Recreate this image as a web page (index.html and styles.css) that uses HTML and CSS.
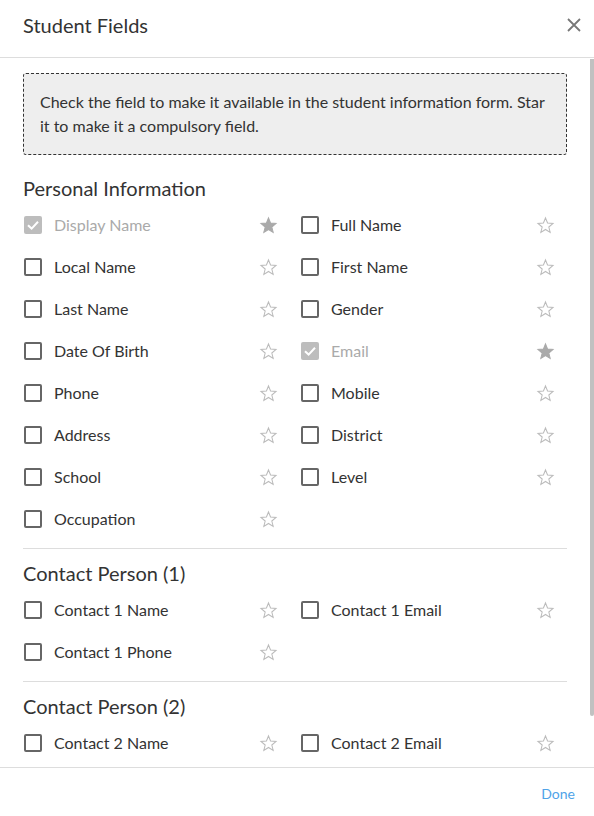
FILE: index.html
```html
<!DOCTYPE html>
<html>
<head>
<meta charset="utf-8">
<link rel="stylesheet" href="styles.css">
</head>
<body>
<div class="dialog">
  <header class="dlg-header">
    <h1 class="dlg-title">Student Fields</h1>
    <button class="close-btn" aria-label="Close">
      <svg width="16" height="16" viewBox="0 0 16 16"><path d="M2 2 L14 14 M14 2 L2 14" stroke="#777" stroke-width="1.8" fill="none"/></svg>
    </button>
  </header>
  <div class="body-wrap">
    <div class="dlg-body">
      <div class="info-box">Check the field to make it available in the student information form. Star it to make it a compulsory field.</div>

      <section class="section">
        <h2 class="section-title">Personal Information</h2>
        <div class="field-grid">
          <div class="field disabled"><span class="cb checked"><svg viewBox="0 0 18 18" width="18" height="18"><path d="M4 9.2 L7.6 12.6 L14 5.8" stroke="#fff" stroke-width="2" fill="none"/></svg></span><span class="label">Display Name</span><svg class="star filled" viewBox="0 0 24 24"><path d="M12 2.5 L14.6 8.9 L21.5 9.4 L16.2 13.9 L17.9 20.7 L12 17 L6.1 20.7 L7.8 13.9 L2.5 9.4 L9.4 8.9 Z"/></svg></div>
          <div class="field"><span class="cb"></span><span class="label">Full Name</span><svg class="star" viewBox="0 0 24 24"><path d="M12 2.5 L14.6 8.9 L21.5 9.4 L16.2 13.9 L17.9 20.7 L12 17 L6.1 20.7 L7.8 13.9 L2.5 9.4 L9.4 8.9 Z"/></svg></div>
          <div class="field"><span class="cb"></span><span class="label">Local Name</span><svg class="star" viewBox="0 0 24 24"><path d="M12 2.5 L14.6 8.9 L21.5 9.4 L16.2 13.9 L17.9 20.7 L12 17 L6.1 20.7 L7.8 13.9 L2.5 9.4 L9.4 8.9 Z"/></svg></div>
          <div class="field"><span class="cb"></span><span class="label">First Name</span><svg class="star" viewBox="0 0 24 24"><path d="M12 2.5 L14.6 8.9 L21.5 9.4 L16.2 13.9 L17.9 20.7 L12 17 L6.1 20.7 L7.8 13.9 L2.5 9.4 L9.4 8.9 Z"/></svg></div>
          <div class="field"><span class="cb"></span><span class="label">Last Name</span><svg class="star" viewBox="0 0 24 24"><path d="M12 2.5 L14.6 8.9 L21.5 9.4 L16.2 13.9 L17.9 20.7 L12 17 L6.1 20.7 L7.8 13.9 L2.5 9.4 L9.4 8.9 Z"/></svg></div>
          <div class="field"><span class="cb"></span><span class="label">Gender</span><svg class="star" viewBox="0 0 24 24"><path d="M12 2.5 L14.6 8.9 L21.5 9.4 L16.2 13.9 L17.9 20.7 L12 17 L6.1 20.7 L7.8 13.9 L2.5 9.4 L9.4 8.9 Z"/></svg></div>
          <div class="field"><span class="cb"></span><span class="label">Date Of Birth</span><svg class="star" viewBox="0 0 24 24"><path d="M12 2.5 L14.6 8.9 L21.5 9.4 L16.2 13.9 L17.9 20.7 L12 17 L6.1 20.7 L7.8 13.9 L2.5 9.4 L9.4 8.9 Z"/></svg></div>
          <div class="field disabled"><span class="cb checked"><svg viewBox="0 0 18 18" width="18" height="18"><path d="M4 9.2 L7.6 12.6 L14 5.8" stroke="#fff" stroke-width="2" fill="none"/></svg></span><span class="label">Email</span><svg class="star filled" viewBox="0 0 24 24"><path d="M12 2.5 L14.6 8.9 L21.5 9.4 L16.2 13.9 L17.9 20.7 L12 17 L6.1 20.7 L7.8 13.9 L2.5 9.4 L9.4 8.9 Z"/></svg></div>
          <div class="field"><span class="cb"></span><span class="label">Phone</span><svg class="star" viewBox="0 0 24 24"><path d="M12 2.5 L14.6 8.9 L21.5 9.4 L16.2 13.9 L17.9 20.7 L12 17 L6.1 20.7 L7.8 13.9 L2.5 9.4 L9.4 8.9 Z"/></svg></div>
          <div class="field"><span class="cb"></span><span class="label">Mobile</span><svg class="star" viewBox="0 0 24 24"><path d="M12 2.5 L14.6 8.9 L21.5 9.4 L16.2 13.9 L17.9 20.7 L12 17 L6.1 20.7 L7.8 13.9 L2.5 9.4 L9.4 8.9 Z"/></svg></div>
          <div class="field"><span class="cb"></span><span class="label">Address</span><svg class="star" viewBox="0 0 24 24"><path d="M12 2.5 L14.6 8.9 L21.5 9.4 L16.2 13.9 L17.9 20.7 L12 17 L6.1 20.7 L7.8 13.9 L2.5 9.4 L9.4 8.9 Z"/></svg></div>
          <div class="field"><span class="cb"></span><span class="label">District</span><svg class="star" viewBox="0 0 24 24"><path d="M12 2.5 L14.6 8.9 L21.5 9.4 L16.2 13.9 L17.9 20.7 L12 17 L6.1 20.7 L7.8 13.9 L2.5 9.4 L9.4 8.9 Z"/></svg></div>
          <div class="field"><span class="cb"></span><span class="label">School</span><svg class="star" viewBox="0 0 24 24"><path d="M12 2.5 L14.6 8.9 L21.5 9.4 L16.2 13.9 L17.9 20.7 L12 17 L6.1 20.7 L7.8 13.9 L2.5 9.4 L9.4 8.9 Z"/></svg></div>
          <div class="field"><span class="cb"></span><span class="label">Level</span><svg class="star" viewBox="0 0 24 24"><path d="M12 2.5 L14.6 8.9 L21.5 9.4 L16.2 13.9 L17.9 20.7 L12 17 L6.1 20.7 L7.8 13.9 L2.5 9.4 L9.4 8.9 Z"/></svg></div>
          <div class="field"><span class="cb"></span><span class="label">Occupation</span><svg class="star" viewBox="0 0 24 24"><path d="M12 2.5 L14.6 8.9 L21.5 9.4 L16.2 13.9 L17.9 20.7 L12 17 L6.1 20.7 L7.8 13.9 L2.5 9.4 L9.4 8.9 Z"/></svg></div>
        </div>
      </section>

      <section class="section">
        <h2 class="section-title">Contact Person (1)</h2>
        <div class="field-grid">
          <div class="field"><span class="cb"></span><span class="label">Contact 1 Name</span><svg class="star" viewBox="0 0 24 24"><path d="M12 2.5 L14.6 8.9 L21.5 9.4 L16.2 13.9 L17.9 20.7 L12 17 L6.1 20.7 L7.8 13.9 L2.5 9.4 L9.4 8.9 Z"/></svg></div>
          <div class="field"><span class="cb"></span><span class="label">Contact 1 Email</span><svg class="star" viewBox="0 0 24 24"><path d="M12 2.5 L14.6 8.9 L21.5 9.4 L16.2 13.9 L17.9 20.7 L12 17 L6.1 20.7 L7.8 13.9 L2.5 9.4 L9.4 8.9 Z"/></svg></div>
          <div class="field"><span class="cb"></span><span class="label">Contact 1 Phone</span><svg class="star" viewBox="0 0 24 24"><path d="M12 2.5 L14.6 8.9 L21.5 9.4 L16.2 13.9 L17.9 20.7 L12 17 L6.1 20.7 L7.8 13.9 L2.5 9.4 L9.4 8.9 Z"/></svg></div>
        </div>
      </section>

      <section class="section">
        <h2 class="section-title">Contact Person (2)</h2>
        <div class="field-grid">
          <div class="field"><span class="cb"></span><span class="label">Contact 2 Name</span><svg class="star" viewBox="0 0 24 24"><path d="M12 2.5 L14.6 8.9 L21.5 9.4 L16.2 13.9 L17.9 20.7 L12 17 L6.1 20.7 L7.8 13.9 L2.5 9.4 L9.4 8.9 Z"/></svg></div>
          <div class="field"><span class="cb"></span><span class="label">Contact 2 Email</span><svg class="star" viewBox="0 0 24 24"><path d="M12 2.5 L14.6 8.9 L21.5 9.4 L16.2 13.9 L17.9 20.7 L12 17 L6.1 20.7 L7.8 13.9 L2.5 9.4 L9.4 8.9 Z"/></svg></div>
        </div>
      </section>
    </div>
    <div class="scroll-thumb"></div>
  </div>
  <footer class="dlg-footer">
    <button class="done-btn">Done</button>
  </footer>
</div>
</body>
</html>
```
FILE: styles.css
```css
* { box-sizing: border-box; }
html, body {
  margin: 0;
  padding: 0;
  background: #fff;
}
body {
  font-family: Lato, "Open Sans", sans-serif;
  color: #333;
}
.dialog {
  width: 594px;
  height: 816px;
  display: flex;
  flex-direction: column;
  background: #fff;
}
.dlg-header {
  height: 58px;
  flex: 0 0 58px;
  display: flex;
  align-items: center;
  justify-content: space-between;
  padding: 0 11px 7px 23px;
  border-bottom: 1px solid #ddd;
}
.dlg-title {
  margin: 0;
  font-size: 20px;
  font-weight: 400;
  color: #333;
}
.close-btn {
  border: 0;
  background: none;
  padding: 0;
  width: 16px;
  height: 16px;
  margin-right: 1px;
  display: flex;
}
.body-wrap {
  flex: 1 1 auto;
  position: relative;
  min-height: 0;
}
.dlg-body {
  height: 100%;
  overflow: hidden;
  padding: 15px 27px 0 23px;
}
.scroll-thumb {
  position: absolute;
  top: 1px;
  right: 0;
  width: 4px;
  height: 657px;
  background: #c1c1c1;
  border-radius: 0 0 2px 2px;
}
.info-box {
  border: 1px dashed #333;
  background: #eee;
  border-radius: 3px;
  padding: 16px 16px;
  font-size: 16px;
  line-height: 24px;
  color: #333;
}
.section {
  padding: 21px 0 8px;
}
.section + .section {
  border-top: 1px solid #ddd;
  padding-top: 12px;
}
.section-title {
  margin: 0 0 4px;
  font-size: 20px;
  font-weight: 400;
  line-height: 24px;
  color: #333;
}
.field-grid {
  display: grid;
  grid-template-columns: 267px 267px;
  column-gap: 10px;
}
.field {
  height: 42px;
  display: flex;
  align-items: center;
  padding-left: 1px;
  padding-right: 12px;
}
.cb {
  width: 18px;
  height: 18px;
  border: 2px solid #666;
  border-radius: 2px;
  flex: 0 0 18px;
  display: flex;
  align-items: center;
  justify-content: center;
}
.cb.checked {
  border: 0;
  background: #bdbdbd;
}
.label {
  margin-left: 12px;
  padding-bottom: 2px;
  flex: 1 1 auto;
  font-size: 16px;
  color: #333;
}
.field.disabled .label {
  color: #aaa;
}
.star {
  width: 19px;
  height: 19px;
  flex: 0 0 19px;
  fill: none;
  stroke: #bbb;
  stroke-width: 1.3;
  stroke-linejoin: miter;
}
.star.filled {
  fill: #aaa;
  stroke: #aaa;
}
.dlg-footer {
  flex: 0 0 49px;
  height: 49px;
  border-top: 1px solid #ddd;
  display: flex;
  align-items: center;
  justify-content: flex-end;
  padding: 2px 19px 0 0;
}
.done-btn {
  border: 0;
  background: none;
  padding: 0;
  font-family: Lato, "Open Sans", sans-serif;
  font-size: 14px;
  color: #4fa3e8;
}
```
